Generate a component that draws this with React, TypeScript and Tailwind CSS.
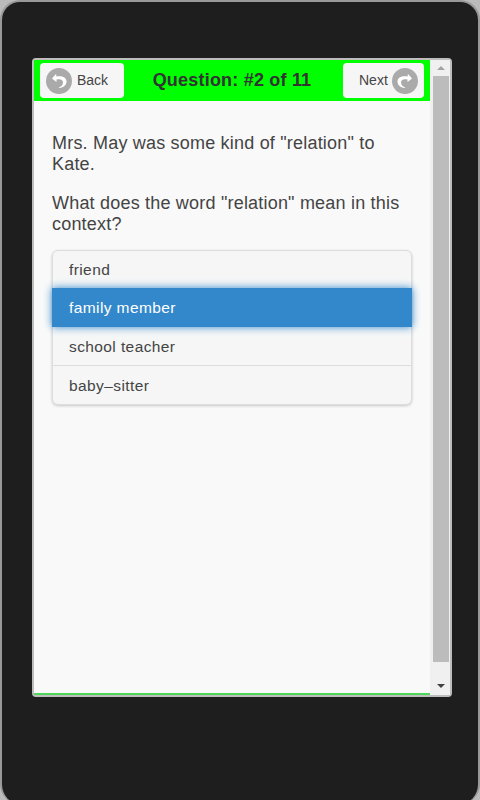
// ─── ICONS ───────────────────────────────────────────────────────

function BackIcon() {
  return (
    <svg width="26" height="26" viewBox="0 0 26 26">
      <circle cx="13" cy="13" r="13" fill="#aaaaaa" />
      <path d="M10 6 L6 10.5 L10.5 14 L10.5 11.5 C14 10.5 17 11.5 17 14.5 C17 17 15 18.5 12.5 20 C17 20 20.5 17.5 20.5 13.5 C20.5 9 15.5 7.5 10.5 8.5 Z" fill="#ffffff" />
    </svg>
  )
}

function NextIcon() {
  return (
    <svg width="26" height="26" viewBox="0 0 26 26">
      <circle cx="13" cy="13" r="13" fill="#aaaaaa" />
      <path d="M16 6 L20 10.5 L15.5 14 L15.5 11.5 C12 10.5 9 11.5 9 14.5 C9 17 11 18.5 13.5 20 C9 20 5.5 17.5 5.5 13.5 C5.5 9 10.5 7.5 15.5 8.5 Z" fill="#ffffff" />
    </svg>
  )
}

// ─── ANSWER LIST ─────────────────────────────────────────────────

function AnswerList() {
  return (
    <div className="mt-[15px] w-[360px] rounded-[6px] border border-[#dddddd] bg-[#f6f6f6] text-[15.5px] tracking-[0.4px] text-[#444444] shadow-[0_1px_3px_rgba(0,0,0,0.2)]">
      <div className="flex h-[37px] items-center pl-[16px]">friend</div>
      <div className="relative -mx-px flex h-[39px] items-center bg-[#3388cc] pl-[17px] text-white shadow-[0_0_8px_#3388cc]">
        family member
      </div>
      <div className="flex h-[38px] items-center pl-[16px]">school teacher</div>
      <div className="flex h-[39px] items-center border-t border-[#dddddd] pl-[16px]">baby–sitter</div>
    </div>
  )
}

// ─── MAIN COMPONENT ──────────────────────────────────────────────

export default function App() {
  return (
    <div className="h-[800px] w-[480px] overflow-hidden bg-[#bbbbbb] font-['Liberation_Sans',Arial,sans-serif]">
      <div className="h-[804px] w-[480px] rounded-[20px] border-l-[2px] border-t-[2px] border-r-[2px] border-[#999999] bg-[#1e1e1e] pl-[30px] pt-[56px]">
        <div className="flex h-[639px] w-[420px] rounded-[4px] border-[2px] border-[#bdbdbd] bg-[#f9f9f9]">
          {/* Page */}
          <div className="flex w-[396px] flex-col border-b-[2px] border-[#4fd65a]">
            <div className="flex h-[41px] items-center justify-between bg-[#00ff00] pl-[6px] pr-[6px]">
              <button className="flex h-[35px] w-[84px] items-center rounded-[4px] bg-[#f6f6f6] pl-[6px] text-[14px] text-[#444444]">
                <BackIcon />
                <span className="ml-[5px]">Back</span>
              </button>
              <h1 className="mr-[3px] text-[18px] font-bold tracking-[0.2px] text-[#333333]">Question: #2 of 11</h1>
              <button className="flex h-[35px] w-[81px] items-center rounded-[4px] bg-[#f6f6f6] pl-[16px] text-[14px] text-[#444444]">
                <span className="mr-[4px]">Next</span>
                <NextIcon />
              </button>
            </div>
            <div className="flex-1 pl-[18px] pt-[32px] text-[18px] leading-[21px] tracking-[0.2px] text-[#444444]">
              <p className="w-[352px]">Mrs. May was some kind of "relation" to Kate.</p>
              <p className="mt-[18px] w-[352px]">What does the word "relation" mean in this context?</p>
              <AnswerList />
            </div>
          </div>
          {/* Scrollbar */}
          <div className="flex w-[20px] flex-col items-end bg-[#f0f0f0] pr-[1px]">
            <div className="flex h-[16px] w-[16px] items-center justify-center">
              <div className="h-0 w-0 border-x-[4px] border-b-[4px] border-x-transparent border-b-[#a3a3a3]" />
            </div>
            <div className="w-[16px] flex-1 bg-[#bcbcbc]" />
            <div className="flex h-[33px] w-[16px] items-end justify-center pb-[7px]">
              <div className="h-0 w-0 border-x-[4px] border-t-[4px] border-x-transparent border-t-[#404040]" />
            </div>
          </div>
        </div>
      </div>
    </div>
  )
}
